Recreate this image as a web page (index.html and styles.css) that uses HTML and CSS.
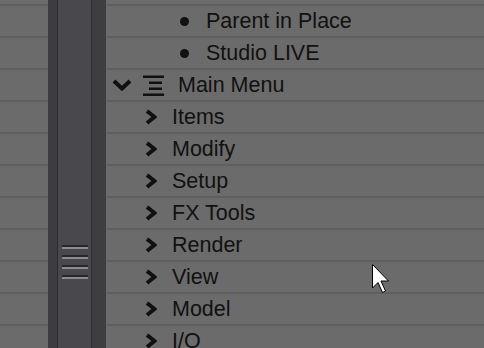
FILE: index.html
```html
<!DOCTYPE html>
<html>
<head>
	<meta charset="utf-8">
	<title>Menu Tree</title>
	<link rel="stylesheet" href="styles.css">
</head>
<body>
	<div class="panel">
		<div class="gutter"></div>

		<div class="rail">
			<div class="rail-left"></div>
			<div class="rail-mid">
				<div class="grip">
					<div class="grip-line"></div>
					<div class="grip-line"></div>
					<div class="grip-line gap"></div>
					<div class="grip-line"></div>
				</div>
			</div>
			<div class="rail-right"></div>
		</div>

		<div class="tree">
			<div class="spacer"></div>

			<div class="row leaf"><span class="bullet"></span><span class="label">Parent in Place</span></div>
			<div class="row leaf"><span class="bullet"></span><span class="label">Studio LIVE</span></div>

			<div class="row top">
				<svg class="chev-down" width="20" height="12" viewBox="0 0 20 12"><polyline points="2,2 10,9.5 18,2" fill="none" stroke="#111" stroke-width="4"/></svg>
				<svg class="menu-icon" width="21" height="21" viewBox="0 0 21 21">
					<rect x="0" y="0.5" width="21" height="2.5" fill="#111"/>
					<rect x="6" y="6.5" width="13" height="2.5" fill="#111"/>
					<rect x="6" y="12.5" width="13" height="2.5" fill="#111"/>
					<rect x="0" y="18.5" width="21" height="2.5" fill="#111"/>
				</svg>
				<span class="label">Main Menu</span>
			</div>

			<div class="row sub"><svg class="chev" width="12" height="16" viewBox="0 0 12 16"><polyline points="2,2 9.5,8 2,14" fill="none" stroke="#111" stroke-width="4"/></svg><span class="label">Items</span></div>
			<div class="row sub"><svg class="chev" width="12" height="16" viewBox="0 0 12 16"><polyline points="2,2 9.5,8 2,14" fill="none" stroke="#111" stroke-width="4"/></svg><span class="label">Modify</span></div>
			<div class="row sub"><svg class="chev" width="12" height="16" viewBox="0 0 12 16"><polyline points="2,2 9.5,8 2,14" fill="none" stroke="#111" stroke-width="4"/></svg><span class="label">Setup</span></div>
			<div class="row sub"><svg class="chev" width="12" height="16" viewBox="0 0 12 16"><polyline points="2,2 9.5,8 2,14" fill="none" stroke="#111" stroke-width="4"/></svg><span class="label">FX Tools</span></div>
			<div class="row sub"><svg class="chev" width="12" height="16" viewBox="0 0 12 16"><polyline points="2,2 9.5,8 2,14" fill="none" stroke="#111" stroke-width="4"/></svg><span class="label">Render</span></div>
			<div class="row sub"><svg class="chev" width="12" height="16" viewBox="0 0 12 16"><polyline points="2,2 9.5,8 2,14" fill="none" stroke="#111" stroke-width="4"/></svg><span class="label">View</span></div>
			<div class="row sub"><svg class="chev" width="12" height="16" viewBox="0 0 12 16"><polyline points="2,2 9.5,8 2,14" fill="none" stroke="#111" stroke-width="4"/></svg><span class="label">Model</span></div>
			<div class="row sub"><svg class="chev" width="12" height="16" viewBox="0 0 12 16"><polyline points="2,2 9.5,8 2,14" fill="none" stroke="#111" stroke-width="4"/></svg><span class="label">I/O</span></div>
		</div>
	</div>

	<!-- mouse pointer over the list -->
	<svg class="cursor" width="20" height="30" viewBox="0 0 20 30">
		<polygon points="0.5,0.5 0.5,24 6,18.5 10.5,28.5 13.5,27 9,17 16.5,17" fill="#fff" stroke="#000" stroke-width="1"/>
	</svg>
</body>
</html>
```

FILE: styles.css
```css
body {
	margin: 0;
	width: 484px;
	height: 348px;
	overflow: hidden;
	background-color: #6b6b6b;
	font-family: "Liberation Sans", Arial, sans-serif;
}

.panel {
	display: flex;
	height: 348px;
	overflow: hidden;
}

.gutter {
	width: 48px;
	background-image: repeating-linear-gradient(to bottom, #5f5f5f 0 2px, transparent 2px 32px);
	background-position: 0 4px;
}

.rail {
	display: flex;
	width: 59px;
}

.rail-left {
	width: 9px;
	background-color: #3d3d3f;
	border-right: 1px solid #2e2e30;
}

.rail-mid {
	width: 34px;
	background-color: #49484d;
	border-right: 1px solid #2e2e30;
	display: flex;
	justify-content: center;
	padding-top: 245px;
	box-sizing: border-box;
}

.rail-right {
	width: 14px;
	background-color: #3e3e40;
}

.grip {
	width: 26px;
}

.grip-line {
	height: 2px;
	background-color: #28282c;
	border-bottom: 2px solid #8c8c8e;
	margin-bottom: 6px;
}

.grip-line.gap {
	margin-top: 2px;
}

.tree {
	flex: 1;
	color: #111;
	font-size: 21.5px;
}

.spacer {
	height: 4px;
}

.row {
	display: flex;
	align-items: center;
	height: 30px;
	line-height: 30px;
	border-top: 2px solid #5f5f5f;
	white-space: nowrap;
}

.row svg {
	flex-shrink: 0;
}

.leaf {
	padding-left: 73px;
}

.bullet {
	width: 9px;
	height: 9px;
	border-radius: 50%;
	background-color: #111;
	margin-right: 17px;
}

.top {
	padding-left: 5px;
}

.chev-down {
	margin-right: 11px;
}

.menu-icon {
	margin-right: 14px;
}

.sub {
	padding-left: 38px;
}

.chev {
	margin-right: 15px;
}

.cursor {
	position: absolute;
	left: 372px;
	top: 264px;
}
```
